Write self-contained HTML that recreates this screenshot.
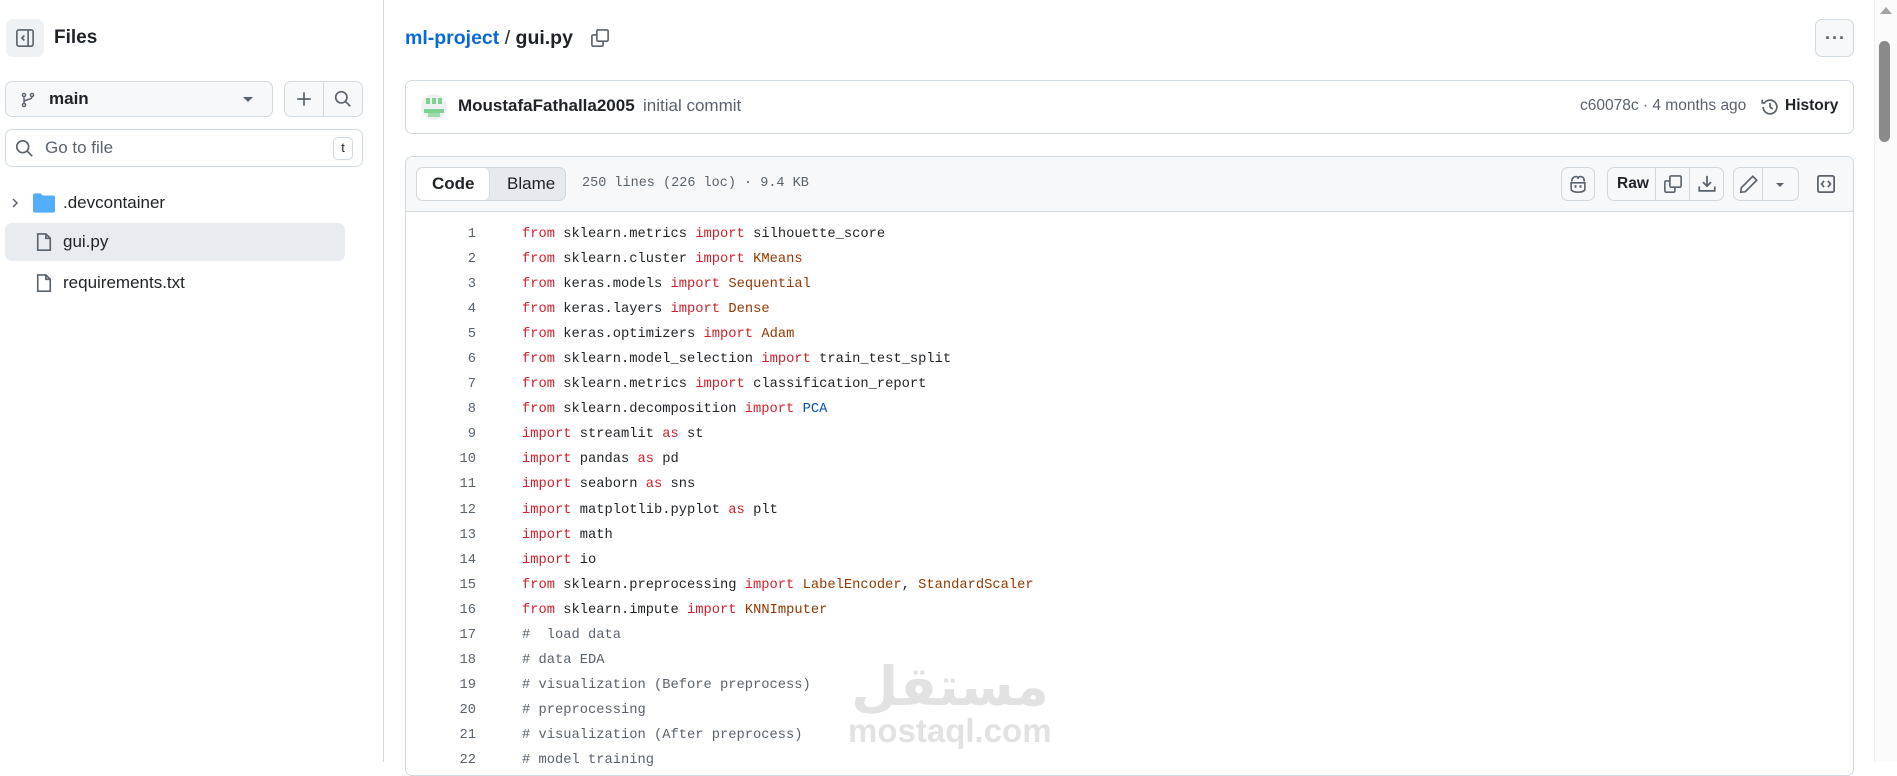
<!DOCTYPE html>
<html><head><meta charset="utf-8"><style>
*{box-sizing:border-box;margin:0;padding:0}
body{width:1897px;height:762px;overflow:hidden;background:#fff;font-family:"Liberation Sans",sans-serif;color:#1f2328;position:relative}
.a{position:absolute}
.btn{position:absolute;border:1px solid #d1d9e0;border-radius:7px;background:#f6f8fa}
svg{display:block}
.code{font-family:"Liberation Mono",monospace;font-size:13.75px;line-height:25.05px;white-space:pre}
.k{color:#cf222e}.o{color:#953800}.b{color:#0550ae}.c{color:#59636e}
</style></head><body>
<!-- sidebar -->
<div class="a" style="left:383px;top:0;width:1px;height:762px;background:#d1d9e0"></div>
<div class="a" style="left:6px;top:19px;width:38px;height:38px;border-radius:7px;background:#eff2f5"></div>
<svg class="a" style="left:15px;top:28px" width="20" height="20" viewBox="0 0 16 16" fill="none" stroke="#59636e" stroke-width="1.3"><rect x="1.5" y="1.5" width="13" height="13" rx="1.5"/><path d="M10.5 1.5v13M7.5 6L5.5 8l2 2"/></svg>
<div class="a" style="left:54px;top:27px;font-size:19px;font-weight:bold">Files</div>

<div class="btn" style="left:5px;top:81px;width:268px;height:36px"></div>
<svg class="a" style="left:20px;top:91px" width="16" height="18" viewBox="0 0 16 16" fill="none" stroke="#59636e" stroke-width="1.4"><circle cx="4" cy="3" r="1.6"/><circle cx="4" cy="13" r="1.6"/><circle cx="12" cy="3" r="1.6"/><path d="M4 4.6v6.8M12 4.6c0 4-8 2-8 6"/></svg>
<div class="a" style="left:49px;top:89px;font-size:17px;font-weight:bold">main</div>
<div class="a" style="left:243px;top:97px;border-left:5px solid transparent;border-right:5px solid transparent;border-top:5px solid #59636e"></div>
<div class="btn" style="left:284px;top:81px;width:79px;height:36px"></div>
<div class="a" style="left:323px;top:82px;width:1px;height:34px;background:#d1d9e0"></div>
<svg class="a" style="left:295px;top:90px" width="18" height="18" viewBox="0 0 16 16" stroke="#59636e" stroke-width="1.5"><path d="M8 2v12M2 8h12"/></svg>
<svg class="a" style="left:334px;top:90px" width="18" height="18" viewBox="0 0 16 16" fill="none" stroke="#59636e" stroke-width="1.5"><circle cx="6.5" cy="6.5" r="5"/><path d="M10 10l4.5 4.5"/></svg>

<div class="a" style="left:5px;top:129px;width:358px;height:38px;border:1px solid #d1d9e0;border-radius:7px"></div>
<svg class="a" style="left:15px;top:139px" width="19" height="19" viewBox="0 0 16 16" fill="none" stroke="#59636e" stroke-width="1.4"><circle cx="6.5" cy="6.5" r="5"/><path d="M10 10l4.5 4.5"/></svg>
<div class="a" style="left:45px;top:138px;font-size:17px;color:#59636e">Go to file</div>
<div class="a" style="left:333px;top:137px;width:20px;height:23px;border:1px solid #d1d9e0;border-radius:5px;font-size:13px;text-align:center;line-height:20px;color:#1f2328">t</div>

<svg class="a" style="left:9px;top:197px" width="12" height="12" viewBox="0 0 12 12" fill="none" stroke="#59636e" stroke-width="1.5"><path d="M4 2l4 4-4 4"/></svg>
<svg class="a" style="left:33px;top:193px" width="22" height="20" viewBox="0 0 16 14"><path d="M0 1.5C0 .7.7 0 1.5 0h4l1.5 1.5h7.5c.8 0 1.5.7 1.5 1.5v9.5c0 .8-.7 1.5-1.5 1.5h-13C.7 14 0 13.3 0 12.5z" fill="#54aeff"/></svg>
<div class="a" style="left:63px;top:193px;font-size:17px">.devcontainer</div>
<div class="a" style="left:5px;top:223px;width:340px;height:38px;border-radius:7px;background:#e8ebef"></div>
<svg class="a" style="left:35px;top:232px" width="18" height="20" viewBox="0 0 14 16" fill="none" stroke="#59636e" stroke-width="1.3"><path d="M2 1.5h6.5l3.5 3.5v9.5H2z M8.5 1.5V5H12"/></svg>
<div class="a" style="left:63px;top:232px;font-size:17px">gui.py</div>
<svg class="a" style="left:35px;top:273px" width="18" height="20" viewBox="0 0 14 16" fill="none" stroke="#59636e" stroke-width="1.3"><path d="M2 1.5h6.5l3.5 3.5v9.5H2z M8.5 1.5V5H12"/></svg>
<div class="a" style="left:63px;top:273px;font-size:17px">requirements.txt</div>

<!-- main header -->
<div class="a" style="left:405px;top:27px;font-size:19.5px;font-weight:bold"><span style="color:#0969da">ml-project</span> <span style="font-weight:normal">/</span> gui.py</div>
<svg class="a" style="left:590px;top:28px" width="20" height="20" viewBox="0 0 16 16" fill="none" stroke="#59636e" stroke-width="1.3"><rect x="1.5" y="5.5" width="9" height="9" rx="1"/><rect x="5.5" y="1.5" width="9" height="9" rx="1" fill="#fff"/></svg>
<div class="btn" style="left:1815px;top:19px;width:39px;height:38px"></div>
<div class="a" style="left:1825px;top:28px;font-size:18px;color:#59636e;letter-spacing:1px;font-weight:bold">···</div>

<div class="a" style="left:405px;top:80px;width:1449px;height:54px;border:1px solid #d1d9e0;border-radius:7px"></div>
<div class="a" style="left:421px;top:94px;width:26px;height:26px;border-radius:50%;background:#eef0f2;overflow:hidden">
<div class="a" style="left:5px;top:4px;width:4px;height:6px;background:#7dd191"></div><div class="a" style="left:11px;top:4px;width:4px;height:6px;background:#7dd191"></div><div class="a" style="left:17px;top:4px;width:4px;height:6px;background:#7dd191"></div>
<div class="a" style="left:3px;top:15px;width:20px;height:4px;background:#7dd191"></div><div class="a" style="left:7px;top:19px;width:12px;height:4px;background:#9fdcab"></div></div>
<div class="a" style="left:458px;top:96px;font-size:17px;font-weight:bold">MoustafaFathalla2005</div>
<div class="a" style="left:643px;top:96px;font-size:17px;color:#59636e">initial commit</div>
<div class="a" style="left:1580px;top:97px;font-size:15.5px;color:#59636e">c60078c · 4 months ago</div>
<svg class="a" style="left:1760px;top:97px" width="20" height="20" viewBox="0 0 16 16" fill="none" stroke="#59636e" stroke-width="1.4"><path d="M2.5 8a5.5 5.5 0 1 0 1.6-3.9M1.8 2.2v2.5h2.5M8 4.8V8l2.2 1.6"/></svg>
<div class="a" style="left:1785px;top:97px;font-size:15.5px;font-weight:bold">History</div>

<!-- file box -->
<div class="a" style="left:405px;top:156px;width:1449px;height:620px;border:1px solid #d1d9e0;border-radius:7px"></div>
<div class="a" style="left:406px;top:157px;width:1447px;height:55px;background:#f6f8fa;border-radius:6px 6px 0 0;border-bottom:1px solid #d1d9e0"></div>
<div class="a" style="left:416px;top:167px;width:150px;height:34px;border:1px solid #d1d9e0;border-radius:7px;background:#e6eaef"></div>
<div class="a" style="left:417px;top:168px;width:73px;height:32px;border-radius:6px;background:#fff;border-right:1px solid #d1d9e0"></div>
<div class="a" style="left:432px;top:174px;font-size:17px;font-weight:bold">Code</div>
<div class="a" style="left:507px;top:174px;font-size:17px">Blame</div>
<div class="a" style="left:582px;top:176px;font-family:'Liberation Mono',monospace;font-size:13.5px;color:#59636e">250 lines (226 loc) · 9.4 KB</div>

<div class="btn" style="left:1561px;top:167px;width:34px;height:34px"></div>
<svg class="a" style="left:1568px;top:174px" width="20" height="20" viewBox="0 0 16 16" fill="none" stroke="#59636e" stroke-width="1.3"><path d="M3 6c0-3 2-4 3.5-4S8 3 8 4c0-1 .5-2 2-2s3 1 3 4M2.5 7h11v5c0 1.5-2 2.5-5.5 2.5S2.5 13.5 2.5 12z"/><path d="M6 9v2M10 9v2" stroke-width="1.6"/></svg>
<div class="btn" style="left:1607px;top:167px;width:117px;height:34px"></div>
<div class="a" style="left:1655px;top:168px;width:1px;height:32px;background:#d1d9e0"></div>
<div class="a" style="left:1689px;top:168px;width:1px;height:32px;background:#d1d9e0"></div>
<div class="a" style="left:1617px;top:175px;font-size:15.5px;font-weight:bold">Raw</div>
<svg class="a" style="left:1663px;top:174px" width="20" height="20" viewBox="0 0 16 16" fill="none" stroke="#59636e" stroke-width="1.3"><rect x="1.5" y="5.5" width="8" height="9" rx="1"/><rect x="5.5" y="1.5" width="9" height="9" rx="1" fill="#f6f8fa"/></svg>
<svg class="a" style="left:1697px;top:174px" width="20" height="20" viewBox="0 0 16 16" fill="none" stroke="#59636e" stroke-width="1.4"><path d="M8 1.5v8M4.8 6.5L8 9.7l3.2-3.2M1.8 10v3.5h12.4V10"/></svg>
<div class="btn" style="left:1733px;top:167px;width:66px;height:34px"></div>
<div class="a" style="left:1762px;top:168px;width:1px;height:32px;background:#d1d9e0"></div>
<svg class="a" style="left:1739px;top:174px" width="20" height="20" viewBox="0 0 16 16" fill="none" stroke="#59636e" stroke-width="1.3"><path d="M11 1.8l3.2 3.2L5 14.2l-3.6.4.4-3.6z"/></svg>
<div class="a" style="left:1776px;top:183px;border-left:4px solid transparent;border-right:4px solid transparent;border-top:4px solid #59636e"></div>
<svg class="a" style="left:1816px;top:174px" width="20" height="20" viewBox="0 0 16 16" fill="none" stroke="#59636e" stroke-width="1.4"><rect x="1.5" y="1.5" width="13" height="13" rx="1.5"/><path d="M6.5 5.5L4.5 8l2 2.5M9.5 5.5l2 2.5-2 2.5"/></svg>

<!-- code -->
<div class="a code" style="left:420px;top:222px;width:56px;text-align:right;color:#59636e">1
2
3
4
5
6
7
8
9
10
11
12
13
14
15
16
17
18
19
20
21
22</div>
<div class="a code" style="left:522px;top:222px"><span class="k">from</span> sklearn.metrics <span class="k">import</span> silhouette_score
<span class="k">from</span> sklearn.cluster <span class="k">import</span> <span class="o">KMeans</span>
<span class="k">from</span> keras.models <span class="k">import</span> <span class="o">Sequential</span>
<span class="k">from</span> keras.layers <span class="k">import</span> <span class="o">Dense</span>
<span class="k">from</span> keras.optimizers <span class="k">import</span> <span class="o">Adam</span>
<span class="k">from</span> sklearn.model_selection <span class="k">import</span> train_test_split
<span class="k">from</span> sklearn.metrics <span class="k">import</span> classification_report
<span class="k">from</span> sklearn.decomposition <span class="k">import</span> <span class="b">PCA</span>
<span class="k">import</span> streamlit <span class="k">as</span> st
<span class="k">import</span> pandas <span class="k">as</span> pd
<span class="k">import</span> seaborn <span class="k">as</span> sns
<span class="k">import</span> matplotlib.pyplot <span class="k">as</span> plt
<span class="k">import</span> math
<span class="k">import</span> io
<span class="k">from</span> sklearn.preprocessing <span class="k">import</span> <span class="o">LabelEncoder</span>, <span class="o">StandardScaler</span>
<span class="k">from</span> sklearn.impute <span class="k">import</span> <span class="o">KNNImputer</span>
<span class="c">#  load data</span>
<span class="c"># data EDA</span>
<span class="c"># visualization (Before preprocess)</span>
<span class="c"># preprocessing</span>
<span class="c"># visualization (After preprocess)</span>
<span class="c"># model training</span></div>

<!-- watermark -->
<div class="a" style="left:850px;top:652px;width:200px;text-align:center;font-family:'DejaVu Sans',sans-serif;font-size:54px;font-weight:bold;color:#e2e2e2;line-height:70px" dir="rtl">مستقل</div>
<div class="a" style="left:848px;top:712px;font-size:33px;font-weight:bold;color:#e2e2e2">mostaql.com</div>

<!-- scrollbar -->
<div class="a" style="left:1874px;top:0;width:23px;height:762px;background:#fafafa;border-left:1px solid #eee"></div>
<div class="a" style="left:1880px;top:7px;border-left:6px solid transparent;border-right:6px solid transparent;border-bottom:7px solid #a3a3a3"></div>
<div class="a" style="left:1879px;top:41px;width:11px;height:101px;border-radius:6px;background:#8a8a8a"></div>
</body></html>
